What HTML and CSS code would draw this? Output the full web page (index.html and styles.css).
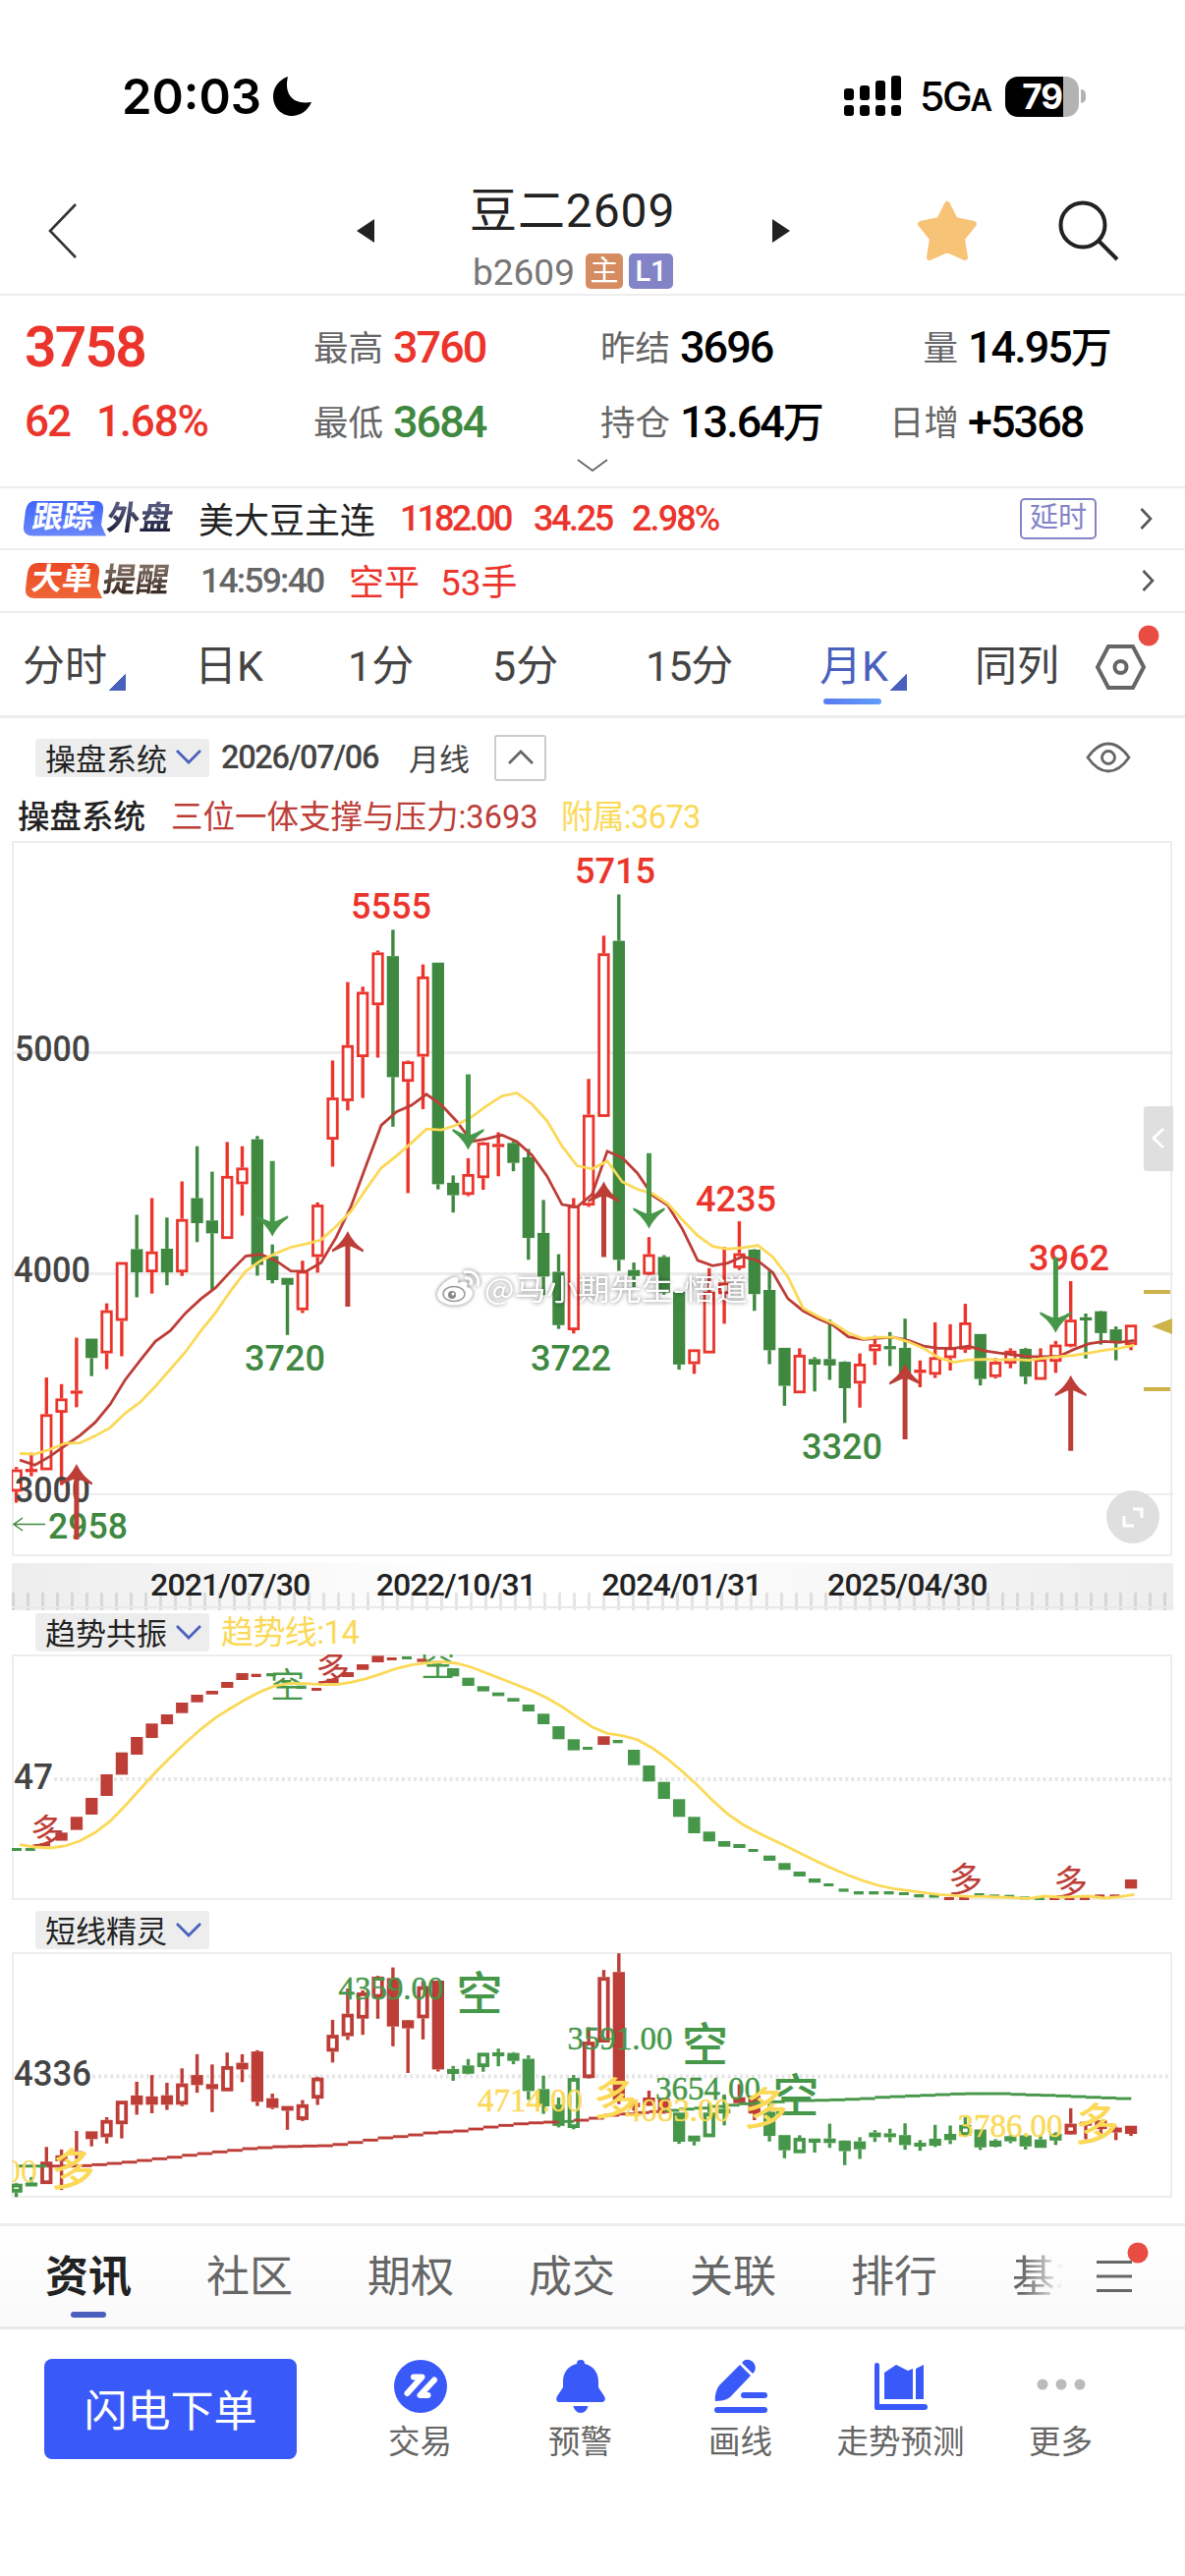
FILE: index.html
```
<!DOCTYPE html>
<html lang="zh-CN">
<head>
<meta charset="utf-8">
<title>豆二2609</title>
<link rel="stylesheet" href="styles.css">
</head>
<body>
<div class="app">
  <div class="status">
    <span class="clock">20:03</span>
    <svg class="moon" width="42" height="42" viewBox="0 0 42 42"><path d="M16 1C12 18 20 30 40 27C36 36 28 41 20 41C9 41 1 32 1 21C1 12 7 4 16 1Z"/></svg>
    <svg class="signal" width="59" height="42" viewBox="0 0 59 42"><rect x="0" y="13" width="10" height="12" rx="3"/><rect x="16" y="10" width="10" height="15" rx="3"/><rect x="32" y="5" width="10" height="20" rx="3"/><rect x="48" y="0" width="10" height="25" rx="3"/><rect x="0" y="30" width="10" height="11" rx="3"/><rect x="16" y="30" width="10" height="11" rx="3"/><rect x="32" y="30" width="10" height="11" rx="3"/><rect x="48" y="30" width="10" height="11" rx="3"/></svg>
    <span class="net">5G<small>A</small></span>
    <span class="battery"><b>79</b></span><i class="nub"></i>
  </div>

  <header class="head">
    <svg class="back" width="30" height="56" viewBox="0 0 30 56"><path d="M28 1L2 28L28 55" fill="none" stroke="#333" stroke-width="2.6"/></svg>
    <svg class="prev" width="18" height="24" viewBox="0 0 18 24"><path d="M0 12L18 0V24Z" fill="#222"/></svg>
    <div class="name">
      <h1>豆二2609</h1>
      <p><span class="code">b2609</span><em class="main">主</em><em class="lv">L1</em></p>
    </div>
    <svg class="next" width="18" height="24" viewBox="0 0 18 24"><path d="M18 12L0 0V24Z" fill="#222"/></svg>
    <svg class="star" width="62" height="62" viewBox="0 0 62 62"><path d="M31 4L39 20L58 24L46 39L49 58L31 50L13 58L16 39L4 24L23 20Z" fill="#f7c376" stroke="#f7c376" stroke-width="6" stroke-linejoin="round"/></svg>
    <svg class="find" width="62" height="62" viewBox="0 0 62 62" fill="none" stroke="#222" stroke-width="4"><circle cx="25" cy="25" r="22.5"/><path d="M41 41L60 60"/></svg>
  </header>

  <section class="quote">
    <div class="row r1">
      <span class="last red">3758</span>
      <span class="cell c2"><label>最高</label><b class="red">3760</b></span>
      <span class="cell c3"><label>昨结</label><b>3696</b></span>
      <span class="cell c4"><label>量</label><b>14.95<i>万</i></b></span>
    </div>
    <div class="row r2">
      <span class="chg red"><span>62</span><span>1.68%</span></span>
      <span class="cell c2"><label>最低</label><b class="green">3684</b></span>
      <span class="cell c3"><label>持仓</label><b>13.64<i>万</i></b></span>
      <span class="cell c4"><label>日增</label><b>+5368</b></span>
    </div>
    <svg class="more" width="32" height="13" viewBox="0 0 32 13"><path d="M1 1L16 12L31 1" fill="none" stroke="#666" stroke-width="1.8"/></svg>
  </section>

  <div class="strip">
    <span class="tag blue"><i>跟踪</i></span><span class="tagtext navy">外盘</span>
    <span class="sname">美大豆主连</span>
    <span class="sval red v1">1182.00</span><span class="sval red v2">34.25</span><span class="sval red v3">2.98%</span>
    <span class="delay">延时</span>
    <svg class="go" width="13" height="22" viewBox="0 0 13 22"><path d="M1.5 1L11 11L1.5 21" fill="none" stroke="#555" stroke-width="2.6"/></svg>
  </div>
  <div class="strip second">
    <span class="tag orange"><i>大单</i></span><span class="tagtext brown">提醒</span>
    <span class="stime">14:59:40</span>
    <span class="sact red">空平</span><span class="shand red">53手</span>
    <svg class="go" width="13" height="22" viewBox="0 0 13 22"><path d="M1.5 1L11 11L1.5 21" fill="none" stroke="#555" stroke-width="2.6"/></svg>
  </div>

  <nav class="tabs">
    <span class="t1">分时<i class="corner"></i></span><span class="t2">日K</span><span class="t3">1分</span><span class="t4">5分</span><span class="t5">15分</span><span class="t6 on">月K<i class="corner"></i></span><span class="t7">同列</span>
    <svg class="hex" width="66" height="66" viewBox="0 0 66 66"><g fill="none" stroke="#666" stroke-width="4"><path d="M14 22H39L50 43L39 64H14L3 43Z"/><circle cx="26.500" cy="43" r="6"/></g><circle cx="55" cy="11" r="10.500" fill="#e84c43"/></svg>
  </nav>

  <div class="tools">
    <span class="pick">操盘系统<svg width="28" height="16" viewBox="0 0 28 16"><path d="M2 2L14 14L26 2" fill="none" stroke="#4960bd" stroke-width="2.8"/></svg></span>
    <span class="date">2026/07/06</span><span class="period">月线</span>
    <span class="fold"><svg width="28" height="16" viewBox="0 0 28 16"><path d="M2 14L14 2L26 14" fill="none" stroke="#666" stroke-width="2.8"/></svg></span>
    <svg class="eye" width="46" height="32" viewBox="0 0 46 32" fill="none" stroke="#666" stroke-width="2.8"><path d="M2 16C9 6 15 2 23 2S37 6 44 16C37 26 31 30 23 30S9 26 2 16Z"/><circle cx="23" cy="16" r="6.500"/></svg>
  </div>
  <div class="legend"><b>操盘系统</b><span class="l1">三位一体支撑与压力:3693</span><span class="l2">附属:3673</span></div>

  <svg id="main" class="chart" width="1206" height="736" viewBox="0 852 1206 736"></svg>

  <div class="axis"><span>2021/07/30</span><span>2022/10/31</span><span>2024/01/31</span><span>2025/04/30</span></div>

  <div class="panehead p2"><span class="pick">趋势共振<svg width="28" height="16" viewBox="0 0 28 16"><path d="M2 2L14 14L26 2" fill="none" stroke="#4960bd" stroke-width="2.8"/></svg></span><span class="trend">趋势线:14</span></div>
  <svg id="trend" class="chart" width="1206" height="252" viewBox="0 1684 1206 252"></svg>

  <div class="panehead p3"><span class="pick">短线精灵<svg width="28" height="16" viewBox="0 0 28 16"><path d="M2 2L14 14L26 2" fill="none" stroke="#4960bd" stroke-width="2.8"/></svg></span></div>
  <svg id="short" class="chart" width="1206" height="276" viewBox="0 1987 1206 276"></svg>

  <nav class="news">
    <span class="on">资讯</span><span>社区</span><span>期权</span><span>成交</span><span>关联</span><span>排行</span><span class="fade">基本</span>
    <svg class="menu" width="56" height="60" viewBox="0 0 56 60"><path d="M0 22.500H36M0 37H36M0 51.500H36" stroke="#666" stroke-width="3"/><circle cx="42" cy="13" r="10.500" fill="#e84c43"/></svg>
  </nav>

  <footer class="bar">
    <button>闪电下单</button>
    <div class="item"><svg width="56" height="56" viewBox="0 0 56 56"><circle cx="28" cy="28" r="27" fill="#3a59f9"/><path d="M21 18.500H29.500L14.500 35M42 21.500L27.500 37H35.500" fill="none" stroke="#fff" stroke-width="6" stroke-linecap="round" stroke-linejoin="round"/></svg>交易</div>
    <div class="item"><svg width="56" height="56" viewBox="0 0 56 56" fill="#3a59f9"><path d="M28 1C31 1 32 2.500 32 5C41 7 46 14 46 23V29L52 38C54 42 52 44 49 44H7C4 44 2 42 4 38L10 29V23C10 14 15 7 24 5C24 2.500 25 1 28 1Z"/><path d="M20.500 48H35.500C34.500 52 32 55 28 55S21.500 52 20.500 48Z"/></svg>预警</div>
    <div class="item"><svg width="56" height="56" viewBox="0 0 56 56" fill="#3a59f9"><path d="M27 6L38 17L17 39C13 42 7 43 2 43C1 38 3 31 6 27Z"/><path d="M30 3C32 0 37 0 40 3C43 6 44 10 41 14L40 15L29 4Z"/><rect x="28" y="34" width="27" height="6" rx="3"/><rect x="1" y="49" width="54" height="6" rx="3"/></svg>画线</div>
    <div class="item"><svg width="56" height="56" viewBox="0 0 56 56" fill="#3a59f9"><path d="M1 6Q1 4 3.500 4T6 6V46H52Q55 46 55 49T52 52H3Q1 52 1 50Z"/><path d="M11 14L23 6L35 12L40 10V41H11Z"/><path d="M43 10L51 6V41H43Z"/></svg>走势预测</div>
    <div class="item"><svg width="56" height="56" viewBox="0 0 56 56" fill="#bbb"><circle cx="9" cy="26" r="5.500"/><circle cx="28" cy="26" r="5.500"/><circle cx="47" cy="26" r="5.500"/></svg>更多</div>
  </footer>
</div>
<script src="chart.js"></script>
</body>
</html>
```
FILE: styles.css
```
* { box-sizing: border-box; }
body { margin: 0; background: #fff; color: #222; font-family: Roboto, "Noto Sans CJK SC", sans-serif; }
.app { width: 1206px; height: 2622px; overflow: hidden; display: flex; flex-direction: column; }
.app > * { flex: none; }
svg { display: block; flex: none; }
i, em { font-style: normal; }
span, label, b { white-space: nowrap; }
.red { color: #eb342b; }
.green { color: #3f8840; }

.status { height: 160px; padding: 36px 0 0 124px; display: flex; align-items: center; color: #000; font-family: Inter, sans-serif; }
.clock { width: 153px; font-size: 49px; font-weight: 600; }
.signal { margin-left: 540px; }
.net { width: 87px; margin-left: 18px; font-size: 41px; font-weight: 500; letter-spacing: -2.3px; }
.net small { font-size: 31px; font-weight: 600; }
.battery { width: 75px; height: 41px; border-radius: 13px; background: linear-gradient(90deg, #000 59px, #b3b3b3 59px); color: #fff; display: flex; align-items: center; justify-content: center; font-size: 35px; }
.battery b { font-weight: 700; letter-spacing: -1px; }
.nub { width: 5px; height: 14px; margin-left: 2px; border-radius: 0 5px 5px 0; background: #b3b3b3; }

.head { height: 141px; border-bottom: 2px solid #ededed; display: flex; padding-left: 49px; }
.back { margin-top: 47px; }
.prev { margin: 63px 0 0 284px; }
.name { width: 240px; margin-left: 80px; padding-left: 18px; }
.name h1 { margin: 26px 0 0; font-size: 48px; line-height: 58px; font-weight: 400; white-space: nowrap; letter-spacing: .9px; margin-left: -1px; }
.name p { margin: 12px 0 0; display: flex; align-items: center; height: 40px; }
.code { width: 115px; margin-left: 2px; font-size: 37px; line-height: 40px; color: #777; font-weight: 400; padding-top: 3px; }
.name em { height: 36px; border-radius: 5px; color: #fff; font-size: 29px; line-height: 36px; text-align: center; }
.main { width: 38px; background: #d48c60; margin-right: 6px; }
.name .lv { width: 45px; background: #8383c8; font-weight: 500; }
.next { margin: 63px 0 0 85px; }
.star { margin: 44px 0 0 129px; }
.find { margin: 44px 0 0 82px; }

.quote { height: 196px; border-bottom: 2px solid #ededed; padding: 14px 0 0 25px; }
.row { display: grid; grid-template-columns: 294px 292px 294px 1fr; height: 76px; align-items: center; color: #000; }
.last { font-size: 57px; font-weight: 600; letter-spacing: -1.8px; }
.chg { display: flex; font-size: 44px; font-weight: 500; letter-spacing: -1.2px; }
.chg span:first-child { width: 73px; letter-spacing: -2px; }
.cell { display: flex; align-items: center; }
.cell label { font-size: 35.5px; color: #666; margin: 0 10px 3px 0; }
.cell b { font-size: 45px; font-weight: 500; letter-spacing: -2px; line-height: 60px; padding-top: 2px; }
.cell b i { font-size: 42px; letter-spacing: 0; }
.c4 label { width: 70px; text-align: right; }
.more { margin: 0 0 0 562px; }

.strip { height: 63px; border-bottom: 2px solid #ededed; display: flex; align-items: center; padding-left: 24px; font-size: 36px; }
.second { height: 64px; }
.tag { width: 84px; height: 36px; clip-path: path("M12 0H72Q82 0 81 10L79 25L84 36H10Q-1 36 0 26L2 10Q4 0 12 0Z"); color: #fff; font-size: 31px; line-height: 34px; font-weight: 700; text-align: center; }
.tag i { display: block; transform: skewX(-8deg); padding-right: 3px; }
.blue { background: linear-gradient(#4066fa, #6a88fa); }
.orange { width: 78px; margin-left: 2px; clip-path: path("M12 0H66Q76 0 75 10L73 25L78 36H10Q-1 36 0 26L2 10Q4 0 12 0Z"); background: linear-gradient(#ec4a24, #ee6638); }
.tagtext { width: 92px; padding-left: 1px; font-size: 33.500px; line-height: 42px; font-weight: 700; transform: skewX(-8deg); background-clip: text; color: transparent; }
.navy { background-image: linear-gradient(#55587c 20%, #1b1d38 85%); }
.brown { width: 96px; background-image: linear-gradient(#7c6a5e 20%, #33241d 85%); }
.sname { width: 205px; margin: -2px 0 0 2px; }
.sval { font-weight: 500; }
.v1 { width: 136px; letter-spacing: -2.9px; }
.v2 { width: 100px; letter-spacing: -2.4px; }
.v3 { width: 100px; letter-spacing: -1.9px; }
.delay { width: 78px; height: 42px; margin-left: 295px; border: 2px solid #8383c8; border-radius: 5px; color: #8383c8; font-size: 29px; line-height: 37px; text-align: center; }
.go { margin-left: 44px; }
.stime { width: 151px; margin-left: 4px; color: #666; font-size: 35.500px; font-weight: 500; letter-spacing: -1.8px; }
.sact { width: 93px; margin-top: -2px; }
.shand { width: 714px; margin-top: -2px; font-size: 37px; }
.second .go { margin-left: 0; }

.tabs { height: 107px; border-bottom: 3px solid #ededed; display: flex; color: #444; font-size: 43px; line-height: 108px; padding-left: 23px; }
.tabs span { display: flex; position: relative; }
.t1 { width: 175px; } .t2 { width: 156px; } .t3 { width: 147px; } .t4 { width: 156px; } .t5 { width: 177px; letter-spacing: -1px; } .t6 { width: 158px; } .t7 { width: 122px; }
.corner { width: 18px; height: 18px; margin: 61px 0 0 1px; background: linear-gradient(135deg, transparent 50%, #4960bd 50%); }
.tabs .on { color: #4960bd; }
.on::after { content: ""; position: absolute; border-radius: 3px; }
.tabs .on::after { left: 4px; top: 87px; width: 59px; height: 6px; background: linear-gradient(90deg, #5a7af0, #619df9); }
.hex { margin-top: 12px; }

.tools { height: 80px; display: flex; align-items: center; padding-left: 36px; }
.pick { width: 177px; height: 39px; border-radius: 4px; background: #ededed; display: flex; align-items: center; justify-content: space-between; padding: 0 7px 2px 10px; font-size: 31px; }
.date { width: 191px; margin-left: 12px; font-size: 32.500px; font-weight: 500; color: #444; letter-spacing: -1.3px; }
.period { width: 87px; margin-top: -2px; font-size: 31px; color: #444; }
.fold { width: 53px; height: 47px; border: 2px solid #ccc; border-radius: 3px; display: flex; align-items: center; justify-content: center; }
.eye { margin-left: 549px; }
.legend { height: 41px; padding-left: 18px; display: flex; font-size: 32.5px; line-height: 43px; }
.legend b { width: 156px; font-weight: 500; }
.l1 { width: 397px; color: #bd3d37; }
.l2 { color: #fbd957; letter-spacing: -.6px; }

.axis { height: 48px; margin: 3px 12px 0; padding: 0 0 0 141px; display: flex; font-size: 32px; line-height: 44px; font-weight: 500; color: #222; background: linear-gradient(#e9e9e9, #e9e9e9) 0 44px / 100% 2px no-repeat, repeating-linear-gradient(90deg, #0000001a 0 3px, transparent 3px 15.03px) 0 30px / 100% 18px no-repeat, linear-gradient(90deg, #ededed, #fff 38%, #fff 50%, #ededed); }
.axis span { width: 229.700px; letter-spacing: -.8px; }

.panehead { display: flex; align-items: flex-start; padding-left: 36px; }
.p2 { height: 45px; padding-top: 3px; }
.p3 { height: 51px; padding-top: 9px; }
.trend { margin-left: 12px; font-size: 33px; line-height: 40px; letter-spacing: -.6px; color: #fbd957; }

.news { height: 108px; border-top: 3px solid #ededed; border-bottom: 3px solid #e8e8e8; background: linear-gradient(#fff, #f9f9f9); display: flex; padding-left: 46px; font-size: 44px; line-height: 105px; color: #666; }
.news span { width: 164px; position: relative; }
.news .on { color: #222; font-weight: 700; }
.news .on::after { left: 26px; top: 87px; width: 36px; height: 6px; background: #4960bd; }
.news .fade { width: 52px; overflow: hidden; background: linear-gradient(90deg, #666 20%, transparent); background-clip: text; color: transparent; }
.menu { margin: 14px 0 0 34px; }

.bar { height: 251px; padding: 30px 0 0 45px; display: flex; align-items: flex-start; }
.bar button { width: 257px; height: 102px; margin: 0 44px 0 0; padding: 0 0 2px; border: 0; border-radius: 8px; background: #3a59f9; color: #fff; font: 44px Roboto, "Noto Sans CJK SC", sans-serif; }
.item { width: 163px; display: flex; flex-direction: column; align-items: center; gap: 6px; font-size: 32.500px; line-height: 46px; color: #666; }
.num { font-family: Roboto, sans-serif; }
.cjk { font-family: "Noto Sans CJK SC", sans-serif; }
.serif { font-family: "Liberation Serif", serif; font-size: 34px; }
```
FILE: chart.js
```
// Monthly candles: [high, body top, body bottom, low, rising]. Levels count down
// from the top of the main pane; 476 levels are 1000 points, level 1421 is 3000.
const candles = [
[1363,1368,1416,1440,1],[1332,1367,1374,1383,1],[1170,1249,1370,1370,1],[1184,1215,1246,1402,1],[1084,1198,1204,1234,1],
[1086,1086,1128,1167,0],[1010,1025,1118,1152,1],[921,921,1048,1124,1],[819,893,943,997,0],[783,898,943,989,1],
[825,892,943,971,0],[747,828,943,951,1],[671,783,837,878,0],[726,831,859,982,0],[662,735,871,871,1],
[671,717,753,821,1],[649,656,927,950,0],[883,908,960,967,0],[955,955,970,1078,0],[918,940,1025,1031,1],
[792,797,910,944,1],[486,566,657,715,1],[317,453,574,594,1],[327,338,479,567,1],[249,253,367,480,1],
[204,261,522,629,0],[486,488,532,772,1],[279,305,478,591,1],[275,275,753,764,0],[734,750,777,814,0],
[697,731,776,779,1],[662,663,740,765,1],[641,666,673,736,1],[660,664,707,725,0],[677,695,869,916,0],
[787,858,952,992,0],[904,942,1057,1065,0],[783,799,1068,1075,1],[526,603,799,802,1],[217,255,608,608,1],
[128,228,916,940,0],[922,938,951,975,0],[867,904,948,950,1],[906,910,987,991,0],[985,985,1142,1153,0],
[1109,1109,1141,1162,1],[934,985,1118,1118,1],[888,965,990,1054,1],[833,902,934,938,1],[893,894,990,1026,0],
[940,981,1111,1141,0],[1106,1106,1188,1231,0],[1107,1121,1204,1204,1],[1126,1130,1142,1200,0],[1045,1130,1144,1175,0],
[1135,1136,1193,1268,0],[1118,1140,1183,1235,1],[1080,1098,1113,1143,1],[1072,1102,1109,1145,0],[1043,1106,1160,1185,0],
[1133,1153,1160,1191,1],[1051,1126,1164,1171,1],[1055,1105,1128,1155,1],[1011,1051,1110,1117,1],[1076,1076,1173,1187,0],
[1128,1136,1169,1172,1],[1107,1112,1140,1150,1],[1106,1108,1168,1184,0],[1107,1130,1175,1175,1],[1091,1099,1136,1160,1],
[962,1045,1103,1105,1],[1032,1040,1046,1129,0],[1026,1027,1074,1099,0],[1060,1066,1092,1133,0],[1056,1056,1100,1111,1]];
const fast = [1348,1359,1340,1317,1295,1267,1228,1175,1133,1092,1069,1031,1001,976,941,908,904,918,940,941,922,868,800,712,626,597,583,559,582,617,661,655,647,661,690,735,797,802,775,682,696,729,777,798,850,917,929,923,909,918,944,1000,1026,1043,1057,1082,1088,1085,1083,1090,1102,1107,1107,1102,1112,1117,1121,1125,1125,1124,1109,1097,1092,1094,1090];
const slow = [1334,1335,1325,1312,1311,1296,1278,1247,1223,1189,1152,1115,1070,1030,983,941,918,902,889,882,873,844,811,763,718,692,664,634,636,625,608,584,563,556,580,616,671,713,720,703,748,764,773,794,830,864,887,893,890,885,910,953,1020,1038,1053,1074,1086,1083,1083,1093,1107,1127,1137,1132,1131,1132,1131,1133,1128,1125,1122,1117,1111,1107,1100];

// Trend pane: [top, bottom, rising], three levels to a pixel.
const bars = [[933,942,0],[933,942,0],[918,928,1],[886,911,1],[838,878,1],[780,831,1],[708,774,1],[641,709,1],[594,648,1],[553,597,1],[525,555,1],[489,521,1],[465,488,1],[453,464,1],[426,444,1],[399,420,1],[401,411,1],[399,409,0],[420,429,0],[437,447,0],[444,453,1],[416,430,1],[396,411,1],[372,389,1],[346,366,1],[351,360,1],[348,357,0],[355,365,1],[362,371,0],[384,409,0],[413,438,0],[439,455,0],[458,469,0],[475,486,0],[495,516,0],[523,555,0],[561,601,0],[601,635,0],[624,633,0],[592,618,1],[603,613,0],[633,680,0],[681,730,0],[731,783,0],[784,838,0],[838,888,0],[883,913,0],[912,929,0],[921,933,0],[936,945,0],[956,972,0],[979,1000,0],[1005,1020,0],[1026,1039,0],[1041,1050,0],[1057,1067,0],[1065,1075,0],[1065,1075,0],[1065,1075,0],[1068,1077,0],[1074,1084,0],[1075,1085,0],[1083,1092,1],[1083,1092,1],[1071,1080,0],[1075,1084,0],[1076,1085,0],[1081,1090,0],[1083,1092,0],[1083,1092,1],[1083,1092,1],[1083,1092,1],[1075,1084,1],[1075,1084,1],[1029,1057,1]];
const trendLine = [923,930,933,927,911,886,851,804,753,702,656,612,571,535,506,479,455,437,430,431,434,434,427,416,401,385,374,368,364,369,381,399,417,435,453,475,502,533,563,583,590,602,628,661,700,742,788,829,861,886,908,930,953,976,997,1016,1033,1047,1057,1063,1069,1075,1078,1081,1081,1083,1085,1087,1080,1083,1082,1080,1086,1082,1075];

// Short-term pane: stepped average, three levels to a pixel.
const steps = [794,794,794,794,793,790,786,782,777,772,767,761,756,751,746,741,738,735,734,733,732,728,722,715,708,704,699,693,690,687,681,675,670,665,662,660,658,654,648,639,635,631,628,624,620,617,612,608,604,600,598,594,594,593,592,590,588,584,582,580,578,576,574,573,573,573,575,577,578,580,582,584,586,588,589];

const X = i => 16.6 + 15.33 * i;
const Y = v => 850 + v / 2.119;
const f = n => n.toFixed(1);
const line = (pts, color, w) => `<polyline points="${pts.map(p => f(p[0]) + ',' + f(p[1])).join(' ')}" fill="none" stroke="${color}" stroke-width="${w}"/>`;
const rect = (x, y, w, h, c) => `<rect x="${f(x)}" y="${f(y)}" width="${f(w)}" height="${f(h)}" fill="${c}"/>`;
const num = (t, x, y, w, c, size = 36, weight = 500) => `<text class="num" x="${x}" y="${y}" fill="${c}" font-size="${size}" font-weight="${weight}" textLength="${w}" lengthAdjust="spacingAndGlyphs">${t}</text>`;
const cjk = (t, x, y, size, c, weight = 400) => `<text class="cjk" x="${x}" y="${y}" fill="${c}" font-size="${size}" font-weight="${weight}">${t}</text>`;
const price = (t, x, y, c) => `<text class="serif" x="${x}" y="${y}" fill="${c}" stroke="${c}" stroke-width=".5" textLength="107" lengthAdjust="spacingAndGlyphs">${t}</text>`;
const RED = '#eb342b', GREEN = '#3f8840', DARKRED = '#bd3d37', LIME = '#469749', GOLD = '#fbd957', GRID = '#ededed';

function candle(i, y, up, color, bw, flat) {
  const x = X(i), [h, t, b, l] = y;
  let s = '';
  if (t > h) s += rect(x - 1.7, h, 3.4, t - h, color);
  if (l > b) s += rect(x - 1.7, b, 3.4, l - b, color);
  if (up && b - t > flat) s += `<rect x="${f(x - 6.15 + bw / 2)}" y="${f(t + bw / 2)}" width="${f(12.3 - bw)}" height="${f(b - t - bw)}" fill="#fff" stroke="${color}" stroke-width="${bw}"/>`;
  else s += rect(x - 6.15, t, 12.3, Math.max(b - t, 3.2), color);
  return s;
}
function arrow(i, v, down) {
  const x = X(i), y = Y(v), c = down ? LIME : DARKRED;
  return `<path transform="translate(${f(x)} ${f(y)}) scale(1 ${down ? -1 : 1})" fill="${c}" d="M0 0C4 8 9 14 16 19V21.500C10 19 7 17 2.500 15.500V77H-2.500V15.500C-7 17 -10 19 -16 21.500V19C-9 14 -4 8 0 0Z"/>`;
}

let m = `<g shape-rendering="crispEdges"><path d="M13 856.500H1192V1583H13Z" fill="none" stroke="${GRID}" stroke-width="2"/>`;
[469, 945, 1421].forEach(v => { m += rect(13, Y(v) - 1, 1181, 2.5, GRID); });
m += '</g><svg x="12" y="852" width="1182" height="736" viewBox="12 852 1182 736">';
candles.forEach((c, i) => { m += candle(i, c.slice(0, 4).map(Y), c[4], c[4] ? RED : GREEN, 2.8, 5); });
m += '</svg>';
m += num('5000', 15, 1080, 77, '#444') + num('4000', 14, 1304.5, 78, '#444') + num('3000', 15, 1529, 77, '#444');
m += num('2958', 49, 1565.5, 81, GREEN) + `<path d="M46 1551.500H15M23 1545L14 1551.500L23 1558" fill="none" stroke="${GREEN}" stroke-width="1.5"/>`;
m += line(fast.map((v, i) => [X(i) + 3.5, Y(v)]), DARKRED, 2.8) + line(slow.map((v, i) => [X(i) + 3.5, Y(v)]), GOLD, 2.8);
m += num('5555', 357, 935, 82, RED) + num('5715', 585, 899, 82, RED) + num('4235', 708, 1233, 82, RED) + num('3962', 1047, 1293, 82, RED);
m += num('3720', 249, 1394.5, 82, GREEN) + num('3722', 540, 1394.5, 82, GREEN) + num('3320', 816, 1484.5, 82, GREEN);
[[4, 1356], [22, 854], [39, 747], [59, 1140], [70, 1165]].forEach(a => { m += arrow(a[0], a[1], false); });
[[17, 866], [30, 679], [42, 849], [69, 1074]].forEach(a => { m += arrow(a[0], a[1], true); });
m += `<path d="M1194 1126H1167Q1164 1126 1164 1129V1189Q1164 1192 1167 1192H1194Z" fill="#dfdfdf"/><path d="M1184 1149L1174 1158.500L1184 1168" fill="none" stroke="#fff" stroke-width="3"/>`;
m += rect(1164, 1313, 27, 4, '#cdb34a') + rect(1164, 1412, 27, 4, '#cdb34a') + '<path d="M1172 1350L1193 1342V1358Z" fill="#cdb34a"/>';
m += '<circle cx="1153" cy="1544" r="27" fill="#dfdfdf"/><path d="M1153 1536H1162V1545M1144 1543V1553H1154" fill="none" stroke="#fff" stroke-width="3"/>';
m += `<g style="filter:drop-shadow(0 0 2px rgba(0,0,0,.55))" fill="#fff"><path d="M462 1300C452 1303 444 1313 445 1319C447 1330 473 1333 480 1320C483 1314 479 1311 475 1310C477 1305 474 1303 466 1306C468 1301 466 1299 462 1300Z"/><ellipse cx="462" cy="1317" rx="11" ry="7.500" fill="none" stroke="#999" stroke-width="1.500"/><circle cx="460" cy="1318" r="4" fill="#888"/><circle cx="461" cy="1317" r="1.500"/><path d="M472 1295C482 1292 489 1300 486 1309M473 1301C478 1300 481 1303 479 1308" fill="none" stroke="#fff" stroke-width="3"/><text class="cjk" x="493" y="1323" font-size="30" textLength="268" lengthAdjust="spacingAndGlyphs">@马小期先生-悟道</text></g>`;
document.getElementById('main').innerHTML = m;

const Y2 = v => 1570 + v / 3;
let t = `<path d="M13 1685H1192V1933H13Z" fill="none" stroke="${GRID}" stroke-width="2"/><path d="M55 1811H1192" stroke="#e6e6e6" stroke-width="4" stroke-dasharray="3 3.100"/>`;
bars.forEach((b, i) => { const w = b[1] - b[0] < 11 ? 10 : 12.3; t += rect(Math.max(12, X(i) - 6.15), Y2(b[0]), w, Y2(b[1]) - Y2(b[0]), b[2] ? DARKRED : LIME); });
t += num('47', 14, 1821, 40, '#444', 36, 500);
[[30.500, 1877], [321, 1711], [965, 1926], [1072, 1929]].forEach(p => { t += cjk('多', p[0], p[1], 35, DARKRED); });
[[275, 1728], [428, 1706]].forEach(p => { t += cjk('空', p[0], p[1], 35, LIME); });
t += line(trendLine.map((v, i) => [X(i) + 3.5, Y2(v)]), GOLD, 2.8);
document.getElementById('trend').innerHTML = t;

const Y3 = v => 2236.5 - ((1421 - v) / 0.476 + 42) * 0.09;
const bull = i => (i > 1 && i < 29) || (i > 37 && i < 44) || i === 48 || i === 49 || i > 69;
let s = `<path d="M13 1988H1192V2236H13Z" fill="none" stroke="${GRID}" stroke-width="2"/><path d="M94 2113.500H1192" stroke="#e6e6e6" stroke-width="4" stroke-dasharray="3 3.100"/><svg x="12" y="1987" width="1182" height="276" viewBox="12 1987 1182 276">`;
candles.forEach((c, i) => {
  const y = c.slice(0, 4).map(Y3);
  if (y[2] - y[1] < 4.5) { y[1] -= 1; y[2] = Math.max(y[2] + 1, y[1] + 4); }
  s += candle(i, y, c[4], bull(i) ? DARKRED : LIME, 3.8, 9);
});
for (let i = 0; i < 74; i++) {
  const y = 1940 + steps[i] / 3, c = (i > 1 && i < 36) || (i > 36 && i < 43) ? DARKRED : LIME;
  s += rect(X(i), y - 1.4, 15.6, 2.9, c);
}
s += price('4359.00', 344.5, 2034.5, LIME) + price('3591.00', 577.5, 2085.5, LIME) + price('3654.00', 667, 2137, LIME);
[[464.5, 2046], [694, 2098], [786.5, 2149.5]].forEach(p => { s += cjk('空', p[0], p[1], 47, LIME, 500); });
s += price('4714.00', 486, 2148.5, GOLD) + price('4083.00', 636, 2158.5, GOLD) + price('3786.00', 974.500, 2175, GOLD);
s += '<text class="serif" x="4" y="2221" fill="' + GOLD + '">00</text>';
[[604, 2152.5], [757, 2162.5], [1094, 2178.5], [52, 2225]].forEach(p => { s += cjk('多', p[0], p[1], 45, GOLD, 500); });
s += '</svg>' + num('4336', 14, 2123, 79, '#444', 36, 500);
document.getElementById('short').innerHTML = s;
```
